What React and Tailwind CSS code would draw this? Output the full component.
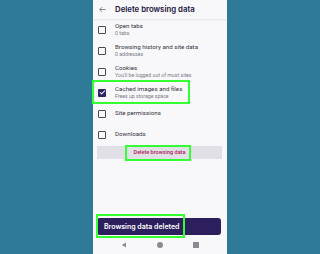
import { Check } from "lucide-react";

const items = [
	{ title: "Open tabs", sub: "0 tabs" },
	{ title: "Browsing history and site data", sub: "0 addresses" },
	{ title: "Cookies", sub: "You'll be logged out of most sites" },
	{ title: "Cached images and files", sub: "Frees up storage space", checked: true },
	{ title: "Site permissions" },
	{ title: "Downloads" },
];

function Checkbox({ checked }) {
	if (checked) {
		return (
			<div className="w-[8px] h-[8px] rounded-[1px] bg-[#2d2366] flex items-center justify-center">
				<Check size={7} strokeWidth={3.5} color="#ffffff" />
			</div>
		);
	}
	return <div className="w-[8px] h-[8px] rounded-[1px] border-[1.3px] border-[#4a4a55]" />;
}

export default function App() {
	return (
		<div
			className="w-[320px] h-[254px] bg-[#2f7a97] flex justify-center overflow-hidden"
			style={{ fontFamily: "Roboto, 'Liberation Sans', sans-serif" }}
		>
			<div className="w-[134px] h-full bg-[#f8f8fa] flex flex-col">
				<div className="h-[19px] flex items-center shrink-0 shadow-[0_1px_2px_rgba(0,0,0,0.08)] bg-[#f8f8fa]">
					<svg className="ml-[6px]" width="7" height="7" viewBox="0 0 9 8" fill="none">
						<path d="M8.5 4H1M4 1L1 4L4 7" stroke="#55555f" strokeWidth="0.9" />
					</svg>
					<span
						className="ml-[9px] text-[7.8px] font-semibold text-[#20123a] leading-none"
						style={{ fontFamily: "Inter, sans-serif" }}
					>
						Delete browsing data
					</span>
				</div>

				{items.map((item) => (
					<div key={item.title} className="relative h-[21px] flex items-center shrink-0">
						<div className="ml-[5px]">
							<Checkbox checked={item.checked} />
						</div>
						<div className="ml-[9px] flex flex-col leading-none">
							<span className="text-[6.2px] text-[#35343d]">{item.title}</span>
							{item.sub && <span className="mt-[2.5px] text-[5.2px] text-[#7a7a85]">{item.sub}</span>}
						</div>
						{item.checked && (
							<div className="absolute left-[-1px] top-[-2px] w-[98px] h-[24px] border-2 border-[#33ff33]" />
						)}
					</div>
				))}

				<div className="relative mt-[1px] ml-[4px] mr-[5px] h-[13px] bg-[#e1e0e6] flex items-center justify-center shrink-0">
					<span className="text-[5.5px] font-medium text-[#b1205f]">Delete browsing data</span>
					<div className="absolute left-[28px] top-[-1px] w-[66px] h-[16px] border-2 border-[#33ff33]" />
				</div>

				<div className="flex-1" />

				<div className="relative ml-[4px] mr-[6px] h-[17px] rounded-[3px] bg-[#2d1f5e] flex items-center shrink-0">
					<span
						className="ml-[7px] text-[7px] font-semibold text-white leading-none"
						style={{ fontFamily: "Inter, sans-serif" }}
					>
						Browsing data deleted
					</span>
					<div className="absolute left-[-1px] top-[-4px] w-[89px] h-[24px] border-2 border-[#33ff33]" />
				</div>

				<div className="h-[19px] flex items-center justify-center gap-[30px] shrink-0">
					<svg width="6" height="6" viewBox="0 0 6 6">
						<path d="M5 0.5V5.5L0.8 3Z" fill="#8a8a92" />
					</svg>
					<div className="w-[6px] h-[6px] rounded-full bg-[#8a8a92]" />
					<div className="w-[6px] h-[6px] bg-[#8a8a92]" />
				</div>
			</div>
		</div>
	);
}
